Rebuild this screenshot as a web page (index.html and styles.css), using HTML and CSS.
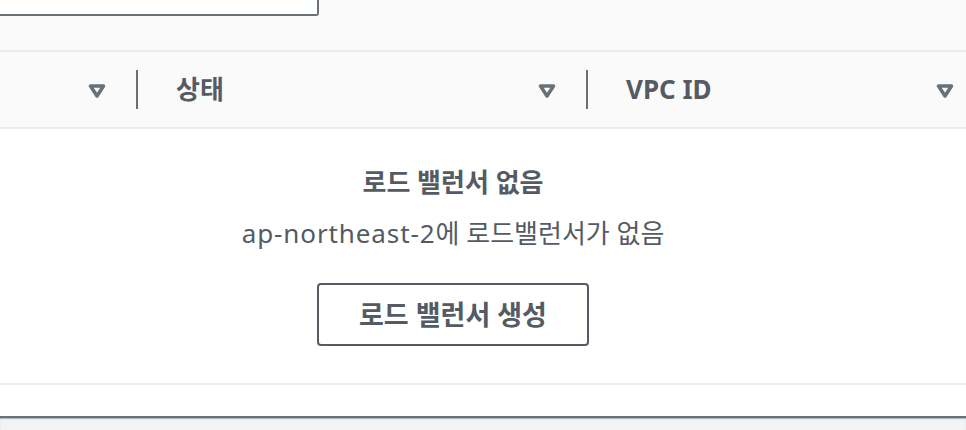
FILE: index.html
```html
<!DOCTYPE html>
<html lang="ko">
<head>
<meta charset="utf-8">
<link rel="stylesheet" href="styles.css">
</head>
<body>
<div class="panel">
  <div class="filter-area">
    <div class="search-box"></div>
  </div>
  <div class="table-header">
    <div class="th th-first">
      <span class="th-label"></span>
      <svg class="sort-icon" width="18" height="14" viewBox="0 0 18 14"><polygon points="2.5,2 15.5,2 9,12" fill="none" stroke="#687078" stroke-width="3.5" stroke-linejoin="round"/></svg>
    </div>
    <div class="th th-mid">
      <span class="th-label">상태</span>
      <svg class="sort-icon" width="18" height="14" viewBox="0 0 18 14"><polygon points="2.5,2 15.5,2 9,12" fill="none" stroke="#687078" stroke-width="3.5" stroke-linejoin="round"/></svg>
    </div>
    <div class="th th-last">
      <span class="th-label">VPC ID</span>
      <svg class="sort-icon" width="18" height="14" viewBox="0 0 18 14"><polygon points="2.5,2 15.5,2 9,12" fill="none" stroke="#687078" stroke-width="3.5" stroke-linejoin="round"/></svg>
    </div>
  </div>
  <div class="empty-state">
    <div class="empty-title">로드 밸런서 없음</div>
    <div class="empty-desc"><span class="region">ap-northeast-2</span>에 로드밸런서가 없음</div>
    <button class="create-btn">로드 밸런서 생성</button>
  </div>
  <div class="panel-footer"></div>
</div>
<div class="page-bottom"></div>
</body>
</html>
```

FILE: styles.css
```css
html, body {
  margin: 0;
  padding: 0;
  background: #ffffff;
  font-family: "Noto Sans", "Noto Sans CJK KR", sans-serif;
  color: #545b64;
  overflow: hidden;
}

.panel {
  background: #ffffff;
}

.filter-area {
  height: 50px;
  background: #fafafa;
  border-bottom: 2px solid #eaeded;
}

.search-box {
  width: 317px;
  height: 14px;
  background: #ffffff;
  border-style: solid;
  border-color: #687078;
  border-width: 0 2px 2px 0;
  border-bottom-right-radius: 3px;
}

.table-header {
  display: grid;
  grid-template-columns: 136px 450px 1fr;
  height: 75px;
  background: #fafafa;
  border-bottom: 2px solid #eaeded;
}

.th {
  position: relative;
  display: flex;
  align-items: center;
  justify-content: space-between;
  padding-left: 40px;
  padding-right: 30px;
}

.th-mid::before,
.th-last::before {
  content: "";
  position: absolute;
  left: 0;
  top: 18px;
  width: 2px;
  height: 39px;
  background: #687078;
}

.th-first {
  padding-right: 30px;
}

.th-last {
  padding-right: 12px;
}

.th-label {
  font-size: 26px;
  font-weight: 700;
  line-height: 34px;
  color: #545b64;
  margin-top: -2px;
}

.sort-icon {
  display: block;
  margin-top: 2px;
}

.empty-state {
  display: flex;
  flex-direction: column;
  align-items: center;
  padding: 36px 60px 37px 0;
  border-bottom: 2px solid #eaeded;
}

.empty-title {
  font-size: 26px;
  font-weight: 700;
  line-height: 34px;
  color: #545b64;
}

.empty-desc {
  font-size: 26px;
  line-height: 34px;
  margin-top: 17px;
  color: #545b64;
}

.region {
  letter-spacing: 0.9px;
}

.create-btn {
  margin-top: 33px;
  width: 272px;
  height: 63px;
  background: #ffffff;
  border: 2px solid #545b64;
  border-radius: 4px;
  font-family: "Noto Sans", "Noto Sans CJK KR", sans-serif;
  font-size: 27px;
  font-weight: 700;
  line-height: 34px;
  color: #545b64;
  padding: 0;
}

.panel-footer {
  height: 31px;
  background: #ffffff;
}

.page-bottom {
  height: 20px;
  background: #f2f3f3;
  border-top: 2px solid #687078;
  box-shadow: inset 0 1px 1px #aab7b8;
}
```
